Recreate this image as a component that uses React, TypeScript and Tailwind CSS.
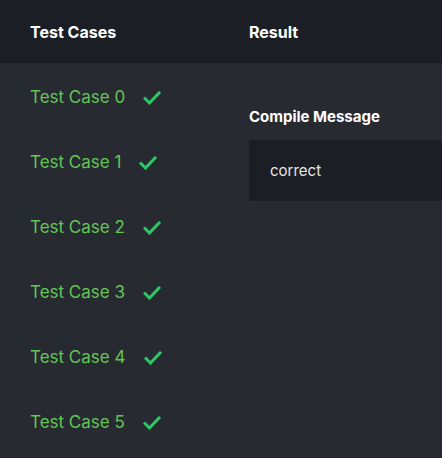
import React from 'react';

function CheckMark() {
  return (
    <svg width="18" height="14" viewBox="0 0 18 14" fill="none" className="shrink-0">
      <path d="M2 7.5 L6.5 12 L16 2" stroke="#2ec866" strokeWidth="3" strokeLinecap="square" strokeLinejoin="miter" />
    </svg>
  );
}

export default function App() {
  const cases = [0, 1, 2, 3, 4, 5];

  return (
    <div className="w-[442px] h-[458px] overflow-hidden bg-[#282a32] text-white" style={{ fontFamily: 'Inter, "Noto Sans", sans-serif' }}>
      {/* Header */}
      <div className="flex h-[63px] items-center bg-[#1c1e26] pt-[1px]">
        <div className="w-[249px] pl-[30px] text-[16px] font-bold">Test Cases</div>
        <div className="text-[16px] font-bold">Result</div>
      </div>

      <div className="flex">
        {/* Test case list */}
        <div className="w-[249px] shrink-0 pl-[30px] pt-[2px]">
          {cases.map((n) => (
            <div key={n} className="flex h-[65px] items-center gap-[18px]">
              <span className="text-[17px] text-[#62c655]">Test Case {n}</span>
              <CheckMark />
            </div>
          ))}
        </div>

        {/* Result pane */}
        <div className="flex-1 pt-[44px]">
          <div className="text-[15px] font-bold leading-[20px]">Compile Message</div>
          <div className="mt-[13px] flex h-[61px] items-center bg-[#1c1e26] pl-[21px] pt-[1px] text-[15px] text-[#e6e6e6]">
            correct
          </div>
        </div>
      </div>
    </div>
  );
}
